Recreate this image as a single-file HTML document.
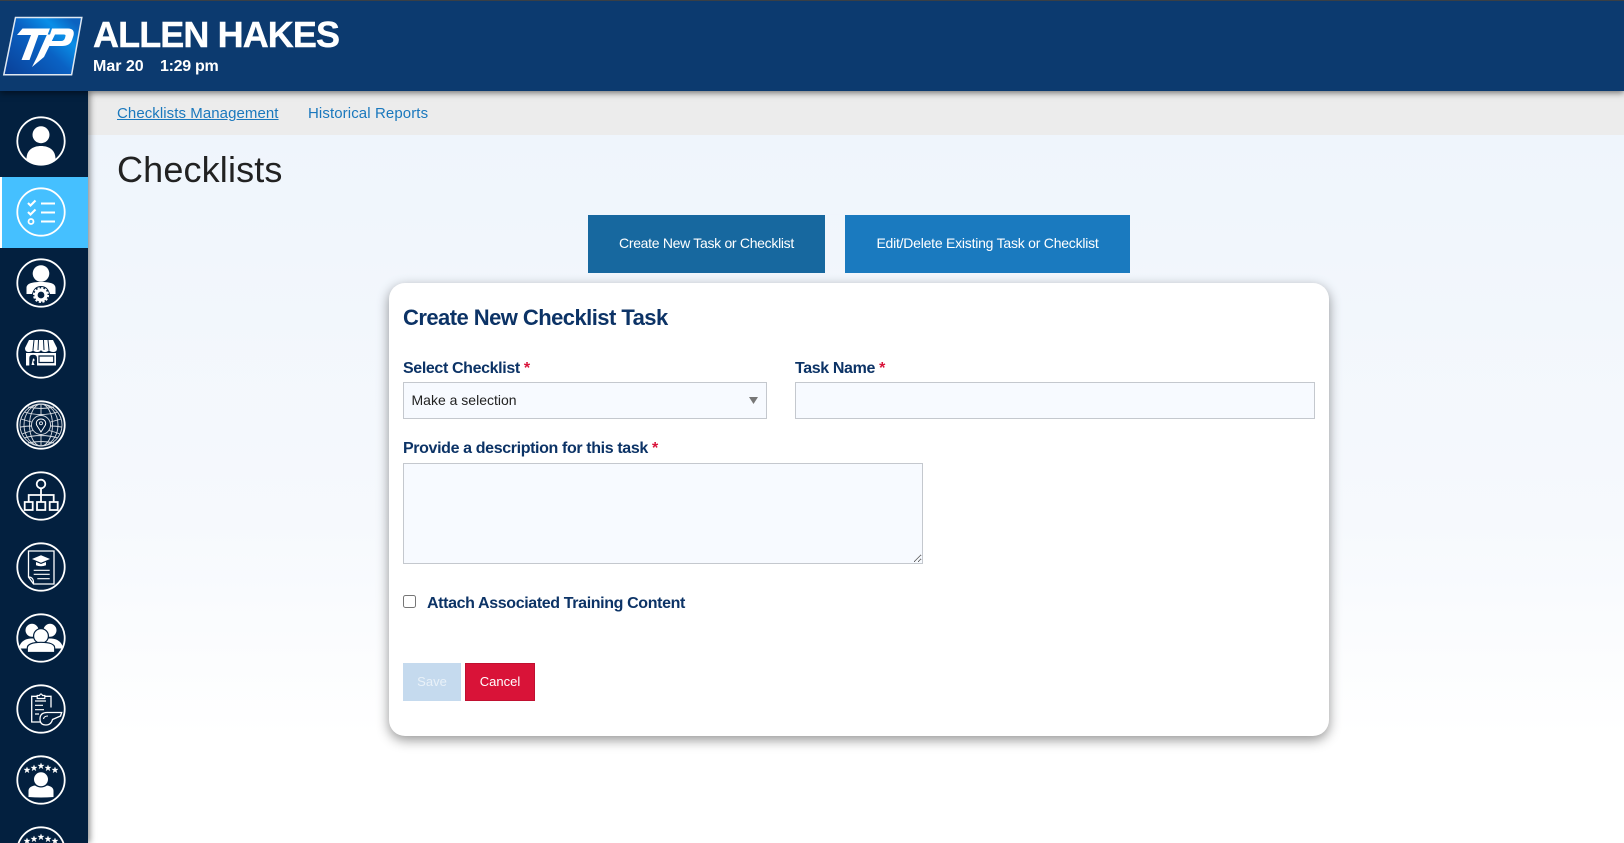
<!DOCTYPE html>
<html lang="en"><head><meta charset="utf-8"><title>Checklists</title>
<style>
*{box-sizing:border-box}
html,body{margin:0;padding:0;width:1624px;height:843px;overflow:hidden;background:#fff;font-family:"Liberation Sans",sans-serif}
.a{position:absolute;white-space:nowrap}
#main{position:absolute;left:88px;top:135px;width:1536px;height:708px;background:linear-gradient(#eff5fc 0,#f6f9fd 55%,#fff 85%)}
#hdr{position:absolute;left:0;top:0;width:1624px;height:91px;background:#0c3a6f;border-top:1px solid #3a3f45;box-shadow:0 2px 6px rgba(0,0,0,.5);z-index:5}
#side{position:absolute;left:0;top:91px;width:88px;height:752px;background:#03203f;box-shadow:2px 0 6px rgba(0,0,0,.45);z-index:4;overflow:hidden}
#act{position:absolute;left:2px;top:86px;width:86px;height:71px;background:#45c0ff}
#actw{position:absolute;left:0;top:86px;width:2px;height:71px;background:#fff}
#tabs{position:absolute;left:88px;top:91px;width:1536px;height:44px;background:#ececec}
.tab{font-size:15px;color:#1a78bd;top:105px}
.btn{position:absolute;display:block;color:#fff;font-size:14px;text-align:center}
#card{position:absolute;left:389px;top:283px;width:940px;height:453px;background:#fff;border-radius:16px;box-shadow:0 4px 12px rgba(0,0,0,.42)}
.lb{font-size:16px;font-weight:bold;color:#0c3366;letter-spacing:-.37px}
.lb i{font-style:normal;color:#d9133a;font-weight:bold}
.f{position:absolute;background:#f7faff;border:1px solid #c4c8ce;border-radius:0;margin:0;padding:0;outline:0}
svg{display:block}
</style></head><body>
<div id="main"></div>
<div id="tabs"></div>
<div id="hdr">
<svg class="a" style="left:0;top:-1px" width="90" height="90" viewBox="0 0 90 90">
<defs><linearGradient id="lg" x1="0" y1="1" x2="1" y2="0.2"><stop offset="0" stop-color="#0a3f96"/><stop offset=".55" stop-color="#0a62c4"/><stop offset=".8" stop-color="#0a8fe8"/><stop offset="1" stop-color="#0b62c0"/></linearGradient></defs>
<title>TP</title>
<path d="M15.500 17.500H81.800L71.600 74.800H3.800Z" fill="url(#lg)" stroke="#dfe8f2" stroke-width="1.500"/>
<path d="M22.500 28.500H50L47.500 35H38.500L29.500 60H21.500L31 35H17Z" fill="#fff"/>
<path d="M52 28.500H68Q75 28.500 73.500 35.500L72 40Q70 46 62 46H49.500L51 41H61Q64 41 65 38L65.500 36Q66 34.500 63.500 34.500H55L44 57 32 67 37 57 47 34.500H50Z" fill="#fff"/>
</svg>
<div class="a" style="left:93px;top:14px;font-size:36px;line-height:40px;font-weight:bold;color:#fff;letter-spacing:-.9px;-webkit-text-stroke:.4px #fff">ALLEN HAKES</div>
<div class="a" style="left:93px;top:56px;font-size:16px;line-height:20px;font-weight:bold;color:#fff">Mar 20</div>
<div class="a" style="left:160px;top:56px;font-size:16px;line-height:20px;font-weight:bold;color:#fff;letter-spacing:-.3px">1:29 pm</div>
</div>

<div id="side"><div id="act"></div><div id="actw"></div>
<svg width="88" height="752" viewBox="0 0 88 752" style="position:absolute;left:0;top:0" fill="none" stroke="#fff" stroke-width="1.800">
<defs><path id="st" d="M0-3.100.8-1 3.100-1 1.300.5 2 2.800 0 1.400-2 2.800-1.300.5-3.100-1-.8-1Z" fill="#fff" stroke="#fff" stroke-width=".3"/></defs>
<g transform="translate(41 50)"><circle r="23.700"/><circle cy="-6.300" r="8.500" fill="#fff" stroke="none"/><path d="M-14.500 18C-14.500 9-8 5 0 5 8 5 14.500 9 14.500 18 10 22.500 5 24 0 24-5 24-10 22.500-14.500 18Z" fill="#fff" stroke="none"/></g>
<g transform="translate(41 121)"><circle r="23.700"/><path d="M-13-9-10.500-6.500-5.500-11.500M-13 0-10.500 2.500-5.500-2.500M0-8.500H14M0 .5H14M0 9.500H14" stroke-width="2.100"/><circle cx="-10" cy="9.500" r="2.500" stroke-width="1.800"/></g>
<g transform="translate(41 192)"><circle r="23.700"/><circle cy="-9.500" r="8.300" fill="#fff" stroke="none"/><path d="M-14.500 11V5C-14.500 0-8-1 0-1S14.500 0 14.500 5V11H9Q7 3 0 3T-9 11Z" fill="#fff" stroke="none"/><circle cy="12" r="5" stroke-width="3.200"/><circle cy="12" r="7.200" stroke-width="1.700" stroke-dasharray="2.200 1.570"/></g>
<g transform="translate(41 263)"><circle r="23.700"/><path d="M-12-14H12L16-6Q16-2 12.500-2 9-2 8-4 6.500-2 4-2 1-2 0-4-1-2-4-2-6.500-2-8-4-9-2-12.500-2-16-2-16-6Z" fill="#fff" stroke="none"/><path d="M-7-14-8-4M-2.500-14-3-4M2.500-14 3-4M7-14 8-4" stroke="#03203f" stroke-width="1"/><path d="M-15-1V11.500H15V-1Z" fill="#fff" stroke="none"/><path d="M-11.700 11.500V4Q-11.700 .8-7.900 .8T-4 4V11.500Z" fill="#03203f" stroke="none"/><path d="M-8 4.500A1.500 1.500 0 1 1-7.900 7.500L-6.500 11H-9.500Z" fill="#fff" stroke="none"/><path d="M-2 2H12.700V8.500H-2Z" fill="#fff" stroke="#03203f" stroke-width="1.200"/></g>
<g transform="translate(41 334)"><circle r="23.700"/><g stroke-width=".9" opacity=".85"><circle r="21"/><ellipse rx="11.500" ry="21"/><ellipse rx="17" ry="21"/><path d="M-17-13Q0-8 17-13M-17 13Q0 8 17 13M-20-6Q-15-4.500-9.500-3M20-6Q15-4.500 9.500-3M-20.500 2Q-15 1-9.500 1M20.500 2Q15 1 9.500 1M-19 9Q-14 7-8 5.500M19 9Q14 7 8 5.500M0-21V-9.500M0 9.500V21M-13-18Q0-15 13-18M-13 18Q0 15 13 18"/><circle r="9.500"/></g><path d="M0 7-3.800 1Q-5.500-1.500-4-4-2.500-6 0-6T4-4Q5.500-1.500 3.800 1Z" stroke-width="1"/><circle cy="-1.700" r="1.500" stroke-width=".8"/></g>
<g transform="translate(41 405)"><circle r="23.700"/><circle cy="-12" r="4.300"/><path d="M0-7.500V6M-12.300 6V-1H12.700V6"/><path d="M-16.300 6H-8.300V14H-16.300ZM-4 6H4.300V14H-4ZM8.700 6H16.700V14H8.700Z"/></g>
<g transform="translate(41 476)"><circle r="23.700"/><path d="M-12.500-16H13V17H-7.500L-12.500 10Z" stroke-width="1.300"/><path d="M-12.500 10Q-7 10-7.500 17" stroke-width="1.200"/><path d="M-9-8 0-11.700 9-8 0-4.200Z" fill="#fff" stroke="none"/><path d="M-5-5V-1.700Q0 .3 5-1.700V-5L0-3Z" fill="#fff" stroke="none"/><path d="M-7.300 3.300H8.700M-7.300 7.300H8.700M-3.700 11.700H8.700" stroke-width="1.200"/></g>
<g transform="translate(41 547)"><circle r="23.700"/><circle cx="-9" cy="-7.700" r="6.500" fill="#fff" stroke="none"/><circle cx="9" cy="-7.700" r="6.500" fill="#fff" stroke="none"/><path d="M-22 10.500C-21 3-15 .5-9 .5H9C15 .5 21 3 22 10.500Z" fill="#fff" stroke="none"/><circle cy="-2" r="7.400" fill="#fff" stroke="#03203f" stroke-width="1.200"/><path d="M-13.700 14.500V10C-13.700 6-8 4.300 0 4.300S13.700 6 13.700 10V14.500Z" fill="#fff" stroke="#03203f" stroke-width="1.200"/></g>
<g transform="translate(41 618)"><circle r="23.700"/><path d="M-4-12.700H-9.300V13H0M10-1.500V-12.700H4" stroke-width="1.300"/><path d="M-3.800-10.500V-13.500H-1.500Q0-16.500 1.500-13.500H3.800V-10.500Z" stroke-width="1.200"/><path d="M-6-8H5M-6-3.700H2M-6 .7H3M-6 5H-2" stroke-width="1.200"/><path d="M20.700 3.500H6Q-1 3.500-1 10-1 16 5 16 10 16 11.500 10.500L19.500 7Z" fill="#03203f" stroke-width="1.300"/><path d="M2.500 10Q3 7 7 7" stroke-width="1.100"/></g>
<g transform="translate(41 689)"><circle r="23.700"/><use href="#st" x="-14" y="-10"/><use href="#st" x="-7" y="-12"/><use href="#st" y="-14"/><use href="#st" x="7" y="-12"/><use href="#st" x="14" y="-10"/><circle cy="-.7" r="7" fill="#fff" stroke="none"/><path d="M-12.500 17V11Q-12.500 6.500-6 5.500-3 7.500 0 7.500T6 5.500Q12.500 6.500 12.500 11V17Q0 18-12.500 17Z" fill="#fff" stroke="none"/></g>
<g transform="translate(41 760)"><circle r="23.700"/><use href="#st" x="-14" y="-10"/><use href="#st" x="-7" y="-12"/><use href="#st" y="-14"/><use href="#st" x="7" y="-12"/><use href="#st" x="14" y="-10"/><circle cy="-.7" r="7" fill="#fff" stroke="none"/></g>
</svg></div>

<a class="a tab" style="left:117px;text-decoration:underline;line-height:18px;letter-spacing:.07px">Checklists Management</a>
<a class="a tab" style="left:308px;line-height:18px;letter-spacing:.1px">Historical Reports</a>
<div class="a" style="left:117px;top:148px;font-size:36px;line-height:44px;color:#222;letter-spacing:.15px">Checklists</div>

<div class="btn" style="left:588px;top:214px;width:237px;height:59px;line-height:59px;background:#17689f;letter-spacing:-.3px">Create New Task or Checklist</div>
<div class="btn" style="left:845px;top:214px;width:285px;height:59px;line-height:59px;background:#1a7abf;letter-spacing:-.23px">Edit/Delete Existing Task or Checklist</div>
<div class="a" style="left:588px;top:214px;width:542px;height:1px;background:#f0f5fc"></div>

<div id="card"></div>
<div class="a" style="left:403px;top:304px;font-size:22px;line-height:28px;font-weight:bold;color:#0c3366;letter-spacing:-.55px">Create New Checklist Task</div>
<div class="a lb" style="left:403px;top:359px;line-height:20px">Select Checklist <i>*</i></div>
<div class="a lb" style="left:795px;top:359px;line-height:20px">Task Name <i>*</i></div>
<select class="f" style="left:403px;top:382px;width:364px;height:37px;padding-left:7.500px;padding-bottom:2px;font:14px 'Liberation Sans',sans-serif;color:#222;appearance:none;-webkit-appearance:none"><option>Make a selection</option></select>
<svg class="a" style="left:749px;top:397px" width="9" height="7"><path d="M0 0H9L4.500 7Z" fill="#777"/></svg>
<input class="f" style="left:795px;top:382px;width:520px;height:37px" type="text">
<div class="a lb" style="left:403px;top:439px;line-height:20px">Provide a description for this task <i>*</i></div>
<textarea class="f" style="left:403px;top:463px;width:520px;height:101px"></textarea>
<input type="checkbox" style="position:absolute;left:403px;top:595px;width:13px;height:13px;margin:0">
<div class="a lb" style="left:427px;top:594px;line-height:20px">Attach Associated Training Content</div>
<div class="btn" style="left:403px;top:663px;width:58px;height:38px;line-height:37px;font-size:13px;background:#c5daee;color:#e9f1f8">Save</div>
<div class="btn" style="left:465px;top:663px;width:70px;height:38px;line-height:35px;font-size:13px;background:#d91338;border:1px solid #c01030">Cancel</div>
</body></html>
